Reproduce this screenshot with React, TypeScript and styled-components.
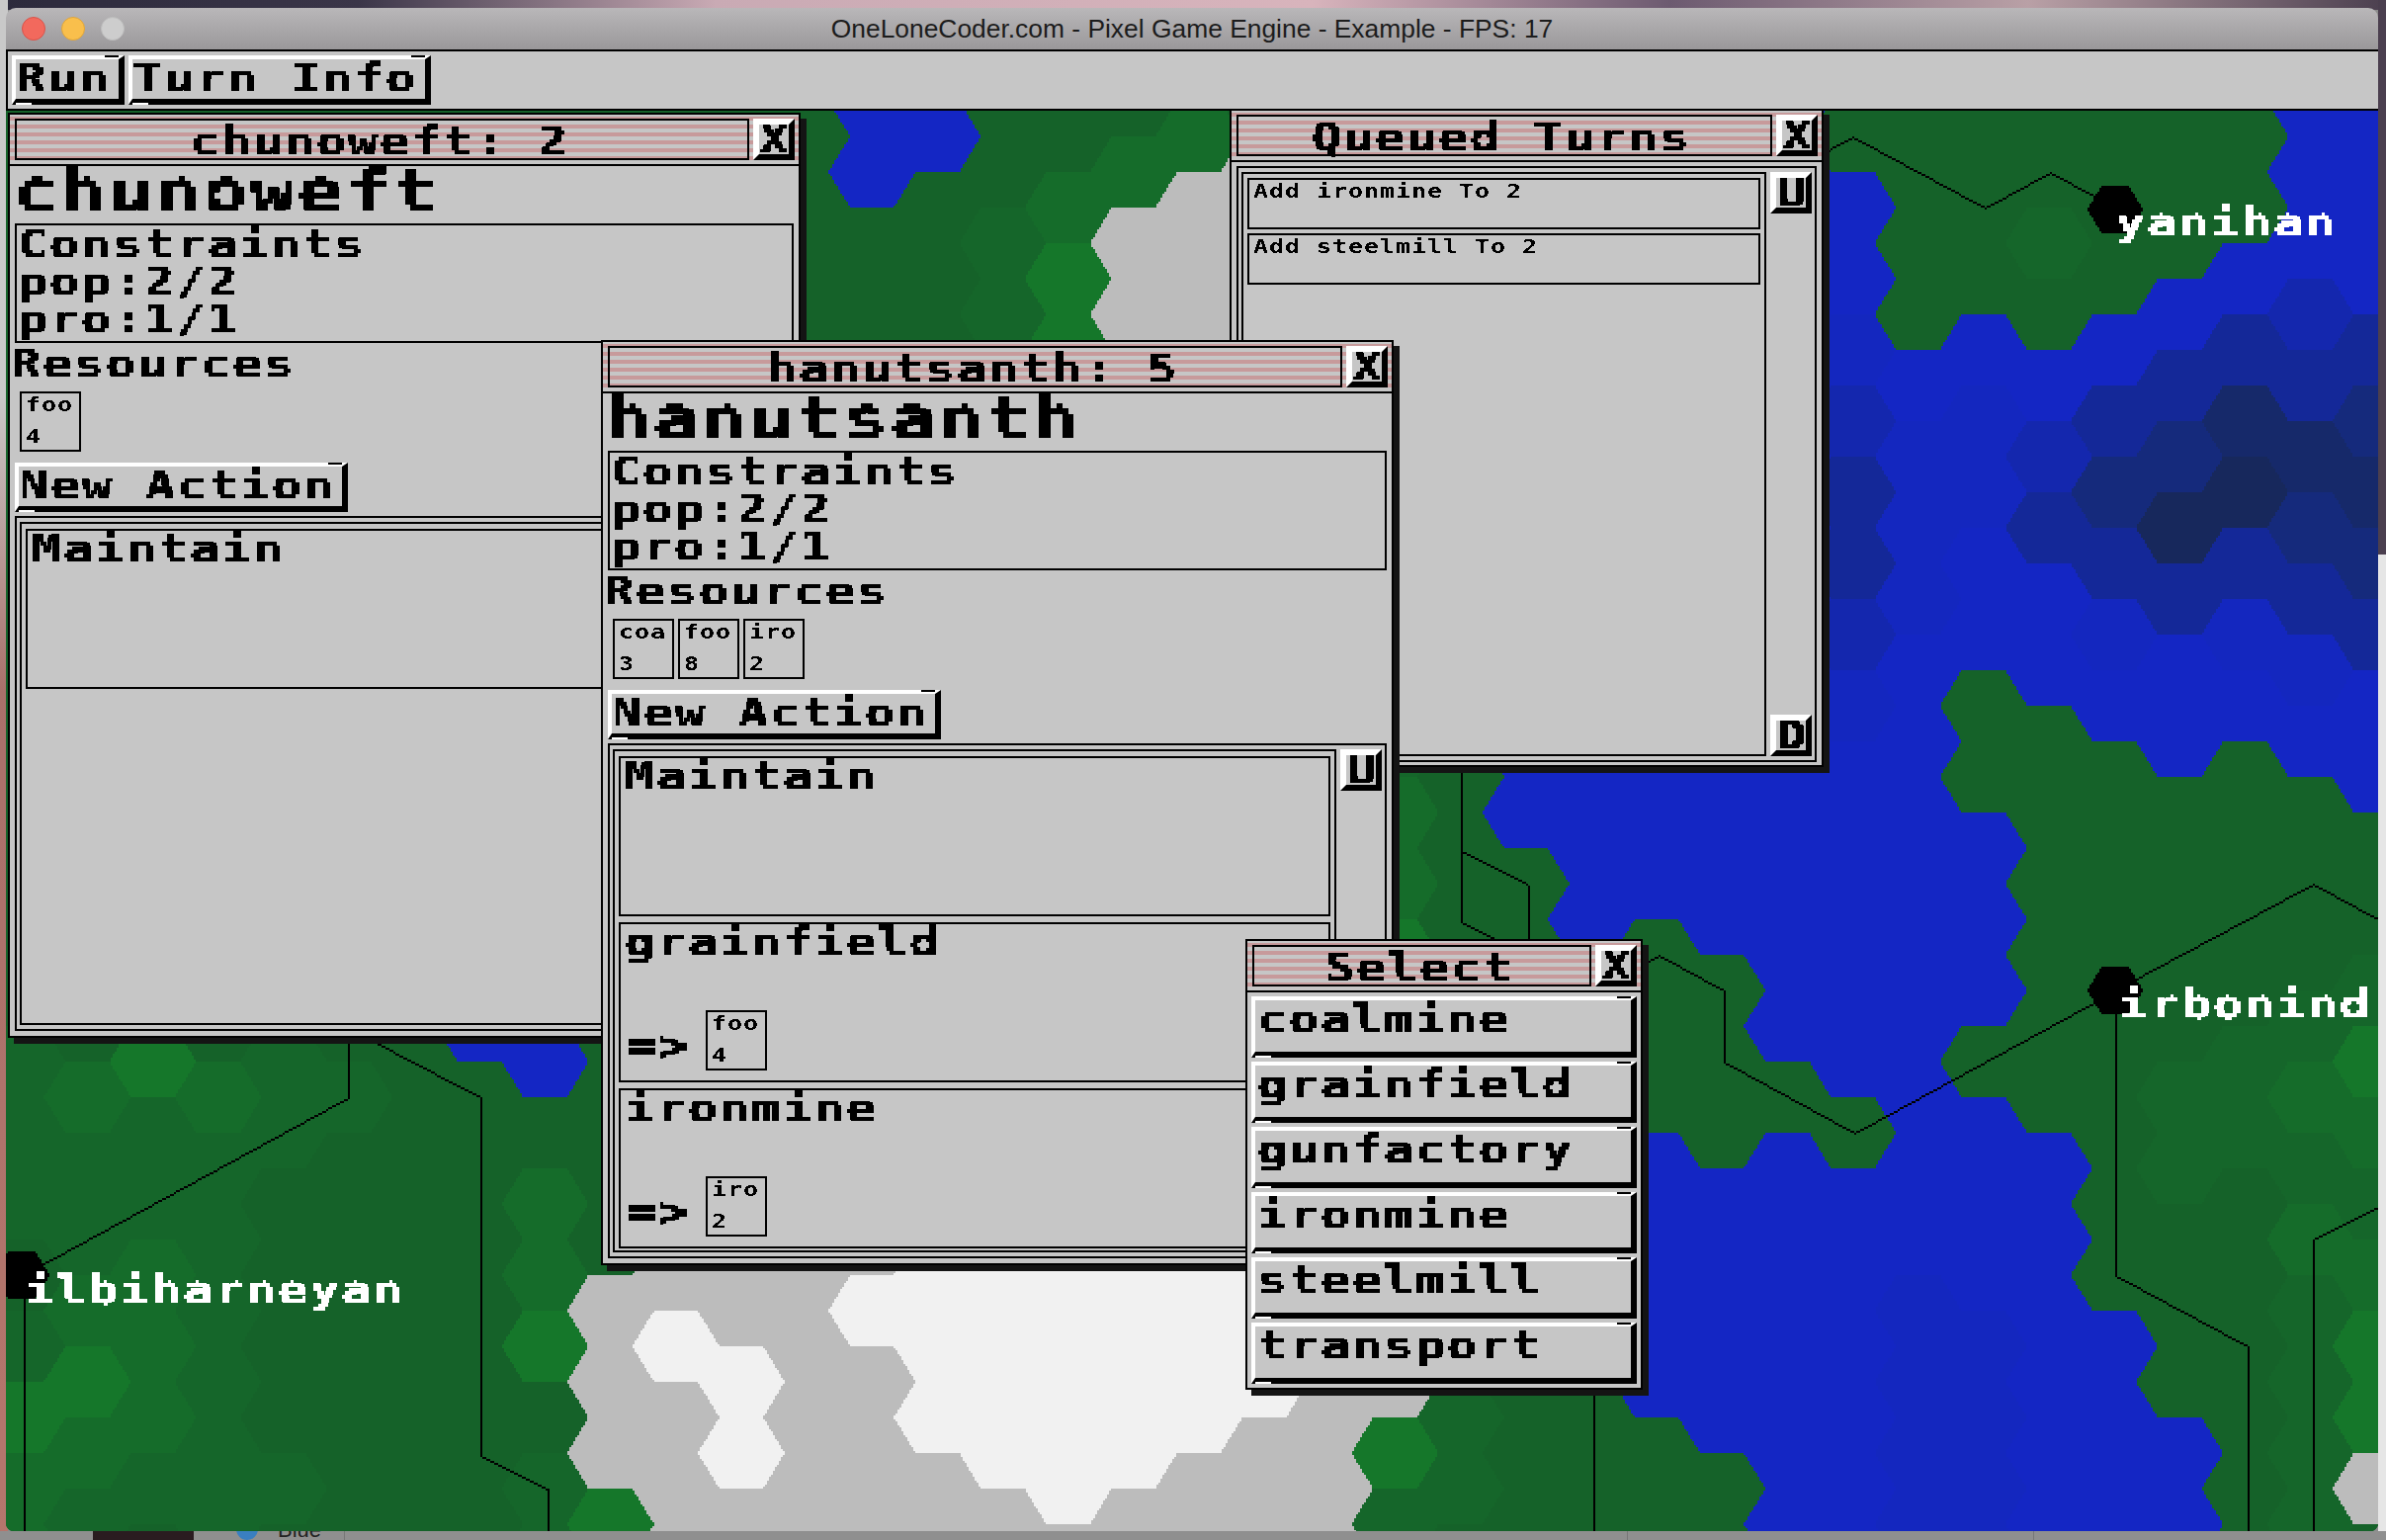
import React from "react";
import styled, { createGlobalStyle } from "styled-components";

const Global = createGlobalStyle`
  html, body { margin: 0; padding: 0; background: #8c8c8c; }
  #root { width: 2414px; height: 1558px; overflow: hidden; }
  button { margin: 0; font: inherit; color: inherit; cursor: default; }
`;

/* ---------- map data: one string per hex column, one char per hex row ---------- */
const COLUMNS = [
  "aaaaaaaaaaaaaabbbabdcc",
  "aaaaaaaaaaaaaaacbbcdcb",
  "aaaaaaaaaaaaaadbbcccba",
  "aaaaaaaaaaaaaaacbbbbbb",
  "aaaaaaaaaaaaaabbaaaaba",
  "aaaaaaaaaaaaaaabaaaaaa",
  "aaaaaaaaaaaaaaaaaaaaaa",
  "aaaaaaaaaaaaaawaaaaaaa",
  "aaaaaaaaaaaaaawaccdabb",
  "aaaaaaaaaaaaaaaaaagggd",
  "aaaaaaaaaaaaaaaaagsggg",
  "aaaaaaaaaaaaaaaaaggssg",
  "aaaaaaaaaaaaaaaaaggggg",
  "wwwaaaaaaaaaaaaaagsggg",
  "wwaaaaaaaaaaaaaaasssgg",
  "aaabbaaaaaaaaaaaassssg",
  "aacddaaaaaaaaaaaassssg",
  "aacggaaaaaaaaaaaassssg",
  "ccgggaaaaaaaaaaaasssgg",
  "aagggaaaaaaaaaaaasssgg",
  "aaaaaaaaaaaaaaaaaggggg",
  "aaaaaaaaaabccdaaaaagdb",
  "aaaaaaaaaaaaaaaaaaabba",
  "aaaaaaaaaawwaaaaaaaaaa",
  "aaaaaaaaaawwwaaaaaaaaa",
  "wwwwwwwwwwwwwaaawwwwaa",
  "wwwwwwwwwwwwwaaawwwwaa",
  "wwwwwwwwwwwwwwwawwwwww",
  "aawwqxyyxqwwwwwawwwwww",
  "aaaaawqqqwwwwwwwwwqqqq",
  "aaaawqqwwaawwwawwwqqqq",
  "aaabawxywwaaaaaawwwwww",
  "aaaawyzyqwaaaaaaaawwww",
  "aaaawyzvywwaaaabbaaaww",
  "aaawyuvyqwaaaabbaaaaaa",
  "wwwwxyuzyqwaaabcbcbbbb",
  "wwwwyzuzywwaabdcbcddga",
];

const COLORS: Record<string, string> = {
  a: "#156229",
  b: "#15662a",
  c: "#156c2a",
  d: "#15772a",
  w: "#1426c4",
  q: "#1427bf",
  x: "#1427ae",
  y: "#142898",
  z: "#152a7c",
  u: "#16296a",
  v: "#17285c",
  g: "#bcbcbc",
  s: "#f1f1f1",
};

const even = (n: number) => Math.round(n / 2) * 2;

function hexPath(cx: number, cy: number, halfW: number, halfH: number, flat: number, extra = 0) {
  let d = "";
  for (let y = even(cy - halfH); y < cy + halfH; y += 2) {
    const t = Math.min(1, Math.abs(y + 1 - cy) / halfH);
    const half = flat + (halfW - flat) * (1 - t);
    const l = even(cx - half);
    const r = even(cx + half) + extra;
    d += `M${l} ${y}H${r}v2H${l}z`;
  }
  return d;
}

function buildTiles(extra: number) {
  const byColor: Record<string, string> = {};
  COLUMNS.forEach((col, k) => {
    const cx = 22.2 + 66.15 * k;
    const y0 = k % 2 === 0 ? 66 : 30;
    col.split("").forEach((code, r) => {
      byColor[code] = (byColor[code] || "") + hexPath(cx, y0 + 72 * r, 44, 36, 22, extra);
    });
  });
  return byColor;
}

type Pt = [number, number];
const ROADS: Pt[][] = [
  [[1808, 174], [1874, 138], [2007, 210], [2073, 174], [2139, 210]],
  [[2139, 1002], [2340, 894], [2406, 930]],
  [[2139, 1002], [1876, 1146], [1744, 1074], [1744, 1002], [1678, 966], [1611, 1002], [1611, 1550]],
  [[2140, 1002], [2140, 1290], [2274, 1362], [2274, 1550]],
  [[2340, 1550], [2340, 1254], [2406, 1220]],
  [[1478, 770], [1478, 932], [1545, 966]],
  [[1478, 860], [1545, 895], [1545, 966]],
  [[24, 1290], [24, 1550]],
  [[22, 1290], [352, 1110], [352, 1050]],
  [[353, 1040], [486, 1110], [486, 1472], [553, 1506], [553, 1550]],
];

function roadPath() {
  let d = "";
  ROADS.forEach((pts) => {
    for (let i = 0; i + 1 < pts.length; i++) {
      const [x0, y0] = pts[i];
      const [x1, y1] = pts[i + 1];
      const n = Math.ceil(Math.max(Math.abs(x1 - x0), Math.abs(y1 - y0)) / 2);
      for (let s = 0; s <= n; s++) {
        const x = even(x0 + ((x1 - x0) * s) / n);
        const y = even(y0 + ((y1 - y0) * s) / n);
        d += `M${x} ${y}h2v2h-2z`;
      }
    }
  });
  return d;
}

const UNDER = buildTiles(2);
const TILES = buildTiles(0);
const ROAD = roadPath();
const CITIES: Pt[] = [[2140, 212], [2140, 1002], [22, 1290]];

/* ---------- desktop behind the app window ---------- */
const Desktop = styled.div`
  position: relative;
  width: 2414px;
  height: 1558px;
  overflow: hidden;
  background:
    linear-gradient(180deg, #4b3f4f 0 561px, #e6e6e6 561px) right top / 8px 100% no-repeat,
    linear-gradient(180deg, #c9c9c9 0 400px, #a9706a 700px, #b5766c 100%) left top / 8px 100% no-repeat,
    linear-gradient(90deg, #2c2a3c 0, #3a3548 15%, #c9aab4 30%, #d8b4bc 55%, #6c5a70 70%, #b9a0a6 85%, #4b3f4f 100%) top / 100% 10px no-repeat;
`;

const Dock = styled.div`
  position: absolute;
  left: 0;
  right: 0;
  bottom: 0;
  height: 9px;
  display: flex;
  align-items: flex-start;
  overflow: hidden;
  background: #8f8f8f;
`;

const DockPicture = styled.div`
  margin-left: 94px;
  width: 102px;
  height: 9px;
  background: #2a1c20;
`;

const DockIcon = styled.span`
  margin-left: 43px;
  width: 22px;
  height: 22px;
  margin-top: -13px;
  border-radius: 50%;
  background: #3a7fc0;
`;

const DockLabel = styled.span`
  margin-left: 20px;
  margin-top: -14px;
  font: 22px "Liberation Sans", sans-serif;
  color: #222;
`;

const DockRule = styled.i<{ $at: number }>`
  position: absolute;
  top: 0;
  left: ${(p) => p.$at}px;
  width: 1px;
  height: 9px;
  background: #777;
`;

const AppWindow = styled.main`
  position: absolute;
  left: 6px;
  top: 8px;
  width: 2400px;
  height: 1541px;
  display: flex;
  flex-direction: column;
  overflow: hidden;
  border-radius: 10px 10px 8px 8px;
`;

const TitleBar = styled.header`
  flex: none;
  height: 42px;
  display: flex;
  align-items: center;
  justify-content: center;
  position: relative;
  background: linear-gradient(180deg, #b9b7b9, #9a989a);
  font: 26.4px/42px "Liberation Sans", Arial, sans-serif;
  color: #1c1c1c;
`;

const Lights = styled.div`
  position: absolute;
  left: 16px;
  top: 9px;
  display: flex;
  gap: 16px;
`;

const Light = styled.span<{ $c: string; $edge: string }>`
  width: 24px;
  height: 24px;
  box-sizing: border-box;
  border-radius: 50%;
  background: ${(p) => p.$c};
  border: 1px solid ${(p) => p.$edge};
`;

const Canvas = styled.div`
  position: relative;
  flex: 1;
  display: flex;
  flex-direction: column;
  min-height: 0;
`;

const MenuBar = styled.nav`
  flex: none;
  height: 62px;
  box-sizing: border-box;
  display: flex;
  align-items: flex-start;
  gap: 4px;
  padding: 4px 0 0 4px;
  background: #c6c6c6;
  border: solid #000;
  border-width: 2px 0 2px 2px;
`;

const MapView = styled.div`
  position: relative;
  flex: 1;
  overflow: hidden;
  background: #156229;
`;

const MapSvg = styled.svg`
  position: absolute;
  left: 0;
  top: 0;
  display: block;
`;

const CityLabel = styled.div<{ $x: number; $y: number }>`
  position: absolute;
  display: flex;
  left: ${(p) => p.$x - 6}px;
  top: ${(p) => p.$y - 112}px;
`;

/* ---------- pixel text: an 8x8 cell at 2 screen pixels per font pixel, times the scale ---------- */
const PixelCell = styled.span<{ $s: number; $n: number; $light?: boolean }>`
  display: block;
  flex: none;
  width: ${(p) => p.$n * 16 * p.$s}px;
  height: ${(p) => 16 * p.$s}px;
  color: ${(p) => (p.$light ? "#fff" : "#000")};
  filter: url(#px${(p) => p.$s});
`;

const PixelGlyphs = styled.span<{ $s: number }>`
  display: block;
  white-space: pre;
  text-align: left;
  font: 700 ${(p) => 20 * p.$s}px / ${(p) => 15 * p.$s}px "DejaVu Sans Mono", monospace;
  letter-spacing: ${(p) => 0.76 * p.$s}px;
  transform: scaleX(1.25);
  transform-origin: left top;
`;

const Pixel = ({ s, light, children }: { s: 1 | 2 | 3; light?: boolean; children: string | number }) => {
  const text = String(children);
  return (
    <PixelCell $s={s} $n={text.length} $light={light}>
      <PixelGlyphs $s={s}>{text}</PixelGlyphs>
    </PixelCell>
  );
};

const FilterDefs = styled.svg`
  position: absolute;
  width: 0;
  height: 0;
`;

/* ---------- windows ---------- */
const Win = styled.section<{ $x: number; $y: number; $w: number; $h: number }>`
  position: absolute;
  left: ${(p) => p.$x - 6}px;
  top: ${(p) => p.$y - 50}px;
  width: ${(p) => p.$w}px;
  height: ${(p) => p.$h}px;
  box-sizing: border-box;
  display: flex;
  flex-direction: column;
  background: #c6c6c6;
  border: 2px solid #000;
  box-shadow: 6px 6px 0 #141414;
`;

const WinHeader = styled.div`
  flex: none;
  height: 52px;
  box-sizing: border-box;
  display: flex;
  align-items: flex-start;
  gap: 4px;
  padding: 4px 4px 0 5px;
  border-bottom: 2px solid #000;
  background: repeating-linear-gradient(180deg, #c6c6c6 0 2px, #c79a9b 2px 6px, #c6c6c6 6px 8px);
`;

const WinTitle = styled.div`
  flex: 1;
  height: 42px;
  box-sizing: border-box;
  border: 2px solid #000;
  padding: 6px 6px 0 0;
  display: flex;
  justify-content: center;
  align-items: flex-start;
`;

const IconBtn = styled.button`
  flex: none;
  width: 42px;
  height: 42px;
  box-sizing: border-box;
  padding: 0;
  display: flex;
  align-items: flex-start;
  justify-content: flex-start;
  background: #c6c6c6;
  border: 6px solid;
  border-color: #fff #000 #000 #fff;
  overflow: visible;
`;

const Bevel = styled.button<{ $w: number; $h: number; $pad: number }>`
  position: relative;
  flex: none;
  width: ${(p) => p.$w}px;
  height: ${(p) => p.$h}px;
  box-sizing: border-box;
  display: flex;
  align-items: flex-start;
  padding: 4px 0 0 ${(p) => p.$pad}px;
  background: #c6c6c6;
  border: solid;
  border-width: 4px 6px 6px 4px;
  border-color: #fff #000 #000 #fff;
  &::before {
    content: "";
    position: absolute;
    top: -4px;
    right: 0;
    width: 14px;
    height: 2px;
    background: #000;
  }
  &::after {
    content: "";
    position: absolute;
    bottom: -6px;
    left: 0;
    width: 16px;
    height: 2px;
    background: #fff;
  }
`;

const Body = styled.div`
  flex: 1;
  min-height: 0;
  display: flex;
  flex-direction: column;
  align-items: flex-start;
  padding: 0 5px;
`;

const CityName = styled.div`
  display: flex;
  margin-top: 3px;
  margin-left: -2px;
`;

const Constraints = styled.div`
  margin-top: 7px;
  align-self: stretch;
  height: 121px;
  box-sizing: border-box;
  border: 2px solid #000;
  padding: 4px 0 0 1px;
  display: flex;
  flex-direction: column;
  align-items: flex-start;
  gap: 6px;
`;

const SectionLabel = styled.div`
  display: flex;
  margin-top: 6px;
  margin-left: -4px;
`;

const ResRow = styled.div`
  margin-top: 11px;
  margin-left: 5px;
  display: flex;
  gap: 4px;
`;

const ResBox = styled.div`
  width: 62px;
  height: 61px;
  box-sizing: border-box;
  border: 2px solid #000;
  padding: 4px 3px 5px 4px;
  display: flex;
  flex-direction: column;
  justify-content: space-between;
  align-items: flex-start;
`;

const ActionRow = styled.div`
  display: flex;
  margin-top: 11px;
`;

const Panel = styled.div<{ $h: number; $mt: number }>`
  margin-top: ${(p) => p.$mt}px;
  align-self: stretch;
  height: ${(p) => p.$h}px;
  box-sizing: border-box;
  border: 2px solid #000;
  padding: 4px 3px;
  display: flex;
  gap: 4px;
`;

const ListFrame = styled.div<{ $gap: number; $top: number }>`
  flex: 1;
  min-width: 0;
  box-sizing: border-box;
  border: 2px solid #000;
  padding: ${(p) => p.$top}px 4px 4px;
  display: flex;
  flex-direction: column;
  gap: ${(p) => p.$gap}px;
`;

const ListItem = styled.div<{ $h: number; $pad: string }>`
  flex: none;
  height: ${(p) => p.$h}px;
  box-sizing: border-box;
  border: 2px solid #000;
  padding: ${(p) => p.$pad};
  display: flex;
  flex-direction: column;
  align-items: flex-start;
  justify-content: space-between;
`;

const ResultRow = styled.div`
  display: flex;
  align-items: flex-end;
  gap: 15px;
  margin: 0 0 10px 3px;
`;

const Arrow = styled.div`
  display: flex;
  margin-bottom: 8px;
`;

const ScrollCol = styled.div`
  flex: none;
  width: 42px;
  display: flex;
  flex-direction: column;
  justify-content: space-between;
`;

const SelectBody = styled.div`
  flex: 1;
  display: flex;
  flex-direction: column;
  gap: 4px;
  padding: 4px 4px 0;
`;

/* ---------- assembled parts ---------- */
const Header = ({ title }: { title: string }) => (
  <WinHeader>
    <WinTitle>
      <Pixel s={2}>{title}</Pixel>
    </WinTitle>
    <IconBtn>
      <Pixel s={2}>X</Pixel>
    </IconBtn>
  </WinHeader>
);

const Res = ({ name, n }: { name: string; n: number }) => (
  <ResBox>
    <Pixel s={1}>{name}</Pixel>
    <Pixel s={1}>{n}</Pixel>
  </ResBox>
);

const Scroll = () => (
  <ScrollCol>
    <IconBtn>
      <Pixel s={2}>U</Pixel>
    </IconBtn>
    <IconBtn>
      <Pixel s={2}>D</Pixel>
    </IconBtn>
  </ScrollCol>
);

const ActionItem = ({ name, res }: { name: string; res?: [string, number] }) => (
  <ListItem $h={162} $pad="3px 4px 0 4px">
    <Pixel s={2}>{name}</Pixel>
    {res && (
      <ResultRow>
        <Arrow>
          <Pixel s={2}>{"=>"}</Pixel>
        </Arrow>
        <Res name={res[0]} n={res[1]} />
      </ResultRow>
    )}
  </ListItem>
);

const CityWindow = ({
  x,
  y,
  name,
  n,
  resources,
  items,
}: {
  x: number;
  y: number;
  name: string;
  n: number;
  resources: [string, number][];
  items: React.ReactNode;
}) => (
  <Win $x={x} $y={y} $w={802} $h={936}>
    <Header title={`${name}: ${n}`} />
    <Body>
      <CityName>
        <Pixel s={3}>{name}</Pixel>
      </CityName>
      <Constraints>
        <Pixel s={2}>Constraints</Pixel>
        <Pixel s={2}>pop:2/2</Pixel>
        <Pixel s={2}>pro:1/1</Pixel>
      </Constraints>
      <SectionLabel>
        <Pixel s={2}>Resources</Pixel>
      </SectionLabel>
      <ResRow>
        {resources.map(([r, c]) => (
          <Res key={r} name={r} n={c} />
        ))}
      </ResRow>
      <ActionRow>
        <Bevel $w={337} $h={50} $pad={0}>
          <Pixel s={2}>New Action</Pixel>
        </Bevel>
      </ActionRow>
      <Panel $h={521} $mt={4}>
        <ListFrame $gap={6} $top={5}>{items}</ListFrame>
        <Scroll />
      </Panel>
    </Body>
  </Win>
);

const OPTIONS = ["coalmine", "grainfield", "gunfactory", "ironmine", "steelmill", "transport"];

export default function App() {
  return (
    <Desktop>
      <Global />
      <FilterDefs aria-hidden="true">
        <defs>
          <filter id="px1" x="-5%" y="-5%" width="110%" height="135%" colorInterpolationFilters="sRGB">
            <feComponentTransfer>
              <feFuncA type="discrete" tableValues="0 1" />
            </feComponentTransfer>
          </filter>
          <filter id="px2" x="-5%" y="-5%" width="110%" height="135%" colorInterpolationFilters="sRGB">
            <feFlood x="1" y="1" width="2" height="2" />
            <feComposite width="4" height="4" />
            <feTile result="grid" />
            <feComposite in="SourceGraphic" in2="grid" operator="in" />
            <feComponentTransfer>
              <feFuncA type="discrete" tableValues="0 1" />
            </feComponentTransfer>
            <feMorphology operator="dilate" radius="1" />
          </filter>
          <filter id="px3" x="-5%" y="-5%" width="110%" height="135%" colorInterpolationFilters="sRGB">
            <feFlood x="2" y="2" width="2" height="2" />
            <feComposite width="6" height="6" />
            <feTile result="grid" />
            <feComposite in="SourceGraphic" in2="grid" operator="in" />
            <feComponentTransfer>
              <feFuncA type="discrete" tableValues="0 1" />
            </feComponentTransfer>
            <feMorphology operator="dilate" radius="2" />
          </filter>
        </defs>
      </FilterDefs>

      <AppWindow>
        <TitleBar>
          <Lights>
            <Light $c="#f2695d" $edge="#d9534a" />
            <Light $c="#f9bf4c" $edge="#dfa53a" />
            <Light $c="#cdcdcd" $edge="#bdbdbd" />
          </Lights>
          OneLoneCoder.com - Pixel Game Engine - Example - FPS: 17
        </TitleBar>
        <Canvas>
          <MenuBar>
            <Bevel $w={114} $h={50} $pad={0}>
              <Pixel s={2}>Run</Pixel>
            </Bevel>
            <Bevel $w={306} $h={50} $pad={0}>
              <Pixel s={2}>Turn Info</Pixel>
            </Bevel>
          </MenuBar>
          <MapView>
            <MapSvg width={2400} height={1437} viewBox="6 112 2400 1437" shapeRendering="crispEdges">
              {Object.entries(UNDER).map(([code, d]) => (
                <path key={code} d={d} fill={COLORS[code]} />
              ))}
              {Object.entries(TILES).map(([code, d]) => (
                <path key={code} d={d} fill={COLORS[code]} />
              ))}
              <path d={ROAD} fill="#000" />
              {CITIES.map(([cx, cy]) => (
                <path key={cy} d={hexPath(cx, cy, 28, 24, 14)} fill="#000" />
              ))}
            </MapSvg>
            <CityLabel $x={2140} $y={210}>
              <Pixel s={2} light>yanihan</Pixel>
            </CityLabel>
            <CityLabel $x={2143} $y={1001}>
              <Pixel s={2} light>irbonind</Pixel>
            </CityLabel>
            <CityLabel $x={25} $y={1290}>
              <Pixel s={2} light>ilbiharneyan</Pixel>
            </CityLabel>
          </MapView>

          <CityWindow
            x={8}
            y={114}
            name="chunoweft"
            n={2}
            resources={[["foo", 4]]}
            items={<ActionItem name="Maintain" />}
          />

          <Win $x={1244} $y={110} $w={601} $h={666}>
            <Header title="Queued Turns" />
            <Body>
              <Panel $h={603} $mt={4}>
                <ListFrame $gap={4} $top={4}>
                  <ListItem $h={52} $pad="4px 0 0 4px">
                    <Pixel s={1}>Add ironmine To 2</Pixel>
                  </ListItem>
                  <ListItem $h={52} $pad="4px 0 0 4px">
                    <Pixel s={1}>Add steelmill To 2</Pixel>
                  </ListItem>
                </ListFrame>
                <Scroll />
              </Panel>
            </Body>
          </Win>

          <CityWindow
            x={608}
            y={344}
            name="hanutsanth"
            n={5}
            resources={[["coa", 3], ["foo", 8], ["iro", 2]]}
            items={
              <>
                <ActionItem name="Maintain" />
                <ActionItem name="grainfield" res={["foo", 4]} />
                <ActionItem name="ironmine" res={["iro", 2]} />
              </>
            }
          />

          <Win $x={1260} $y={950} $w={402} $h={456}>
            <Header title="Select" />
            <SelectBody>
              {OPTIONS.map((o) => (
                <Bevel key={o} $w={390} $h={62} $pad={2}>
                  <Pixel s={2}>{o}</Pixel>
                </Bevel>
              ))}
            </SelectBody>
          </Win>
        </Canvas>
      </AppWindow>

      <Dock>
        <DockPicture />
        <DockIcon />
        <DockLabel>Blue</DockLabel>
        <DockRule $at={348} />
        <DockRule $at={1646} />
        <DockRule $at={2057} />
      </Dock>
    </Desktop>
  );
}
